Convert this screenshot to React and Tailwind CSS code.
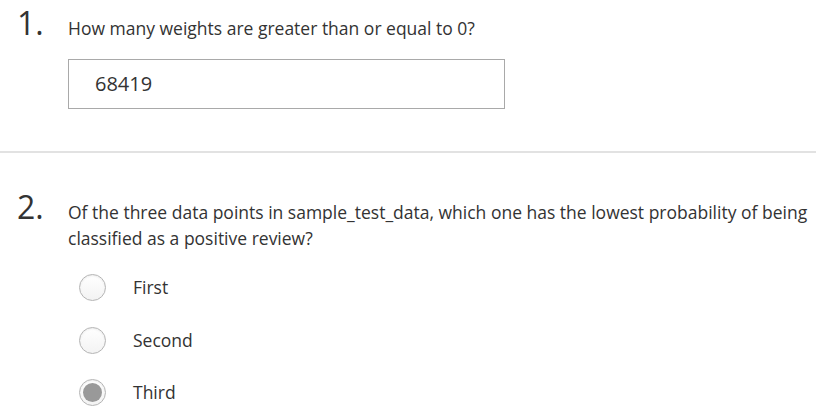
import { useState } from "react";

// quiz answers shown in the screenshot
const options = ["First", "Second", "Third"];

function Radio({ checked }) {
  return (
    <span className="w-[27px] h-[27px] rounded-full border border-[#b5b5b5] bg-gradient-to-b from-white to-[#f3f3f3] shadow-[inset_0_1px_2px_rgba(0,0,0,0.08)] flex items-center justify-center shrink-0">
      {checked && <span className="w-[19px] h-[19px] rounded-full bg-[#999999]" />}
    </span>
  );
}

export default function App() {
  const [answer, setAnswer] = useState("Third");

  return (
    <div className="w-[816px] h-[416px] overflow-hidden bg-white text-[#333333] font-['Open_Sans',sans-serif]">
      {/* ------------------------------ Question 1 ------------------------------ */}
      <div className="pl-[17px] pt-[3px] pb-[42px] border-b-2 border-[#e2e2e2]">
        <div className="flex items-baseline">
          <span className="w-[51px] shrink-0 text-[32px] leading-[40px]">1.</span>
          <p className="text-[17.5px] leading-[26px]">How many weights are greater than or equal to 0?</p>
        </div>
        <div className="ml-[51px] mt-[16px] w-[437px] h-[50px] border border-[#a9a9a9] flex items-center pl-[26px] text-[20px]">
          68419
        </div>
      </div>

      {/* ------------------------------ Question 2 ------------------------------ */}
      <div className="pl-[17px] pt-[34px]">
        <div className="flex items-baseline">
          <span className="w-[51px] shrink-0 text-[32px] leading-[40px]">2.</span>
          <p className="text-[17.5px] leading-[26px]">
            Of the three data points in sample_test_data, which one has the lowest probability of being
            classified as a positive review?
          </p>
        </div>
        <div className="ml-[62px] mt-[23px] flex flex-col gap-[25.5px]">
          {options.map((o) => (
            <label
              key={o}
              onClick={() => setAnswer(o)}
              className="flex items-center gap-[27px] text-[17.5px] leading-[27px] cursor-pointer"
            >
              <Radio checked={answer === o} />
              <span>{o}</span>
            </label>
          ))}
        </div>
      </div>
    </div>
  );
}
